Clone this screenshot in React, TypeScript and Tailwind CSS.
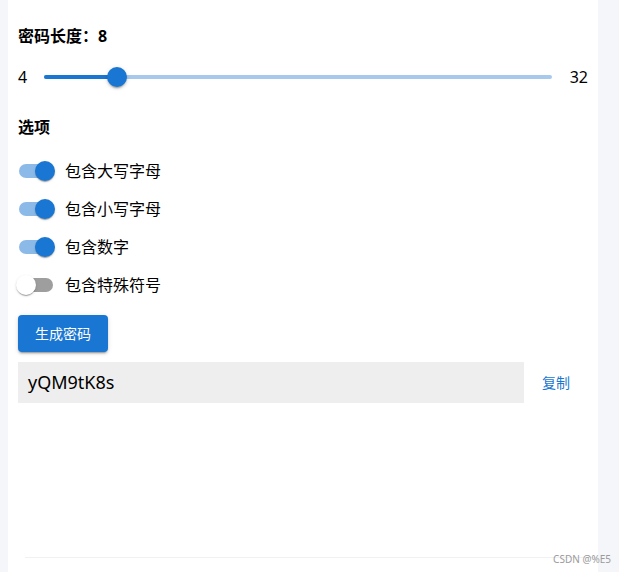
import React, { useState } from 'react';

const font = { fontFamily: '"Noto Sans", "Noto Sans CJK SC", sans-serif' };

const Toggle: React.FC<{ checked: boolean; label: string; onChange: () => void }> = ({ checked, label, onChange }) => (
    <div className="flex items-center h-[38px] cursor-pointer" onClick={onChange}>
        <div className="relative w-[40px] h-[20px] ml-[-2px]">
            <div className={`absolute left-[3px] top-[3px] w-[34px] h-[14px] rounded-full ${checked ? 'bg-[#8cbae8]' : 'bg-[#9e9e9e]'}`} />
            <div
                className={`absolute top-0 w-[20px] h-[20px] rounded-full shadow-[0_2px_1px_-1px_rgba(0,0,0,0.2),0_1px_1px_0_rgba(0,0,0,0.14),0_1px_3px_0_rgba(0,0,0,0.12)] ${checked ? 'left-[19px] bg-[#1976d2]' : 'left-[0px] bg-white'}`}
            />
        </div>
        <span className="ml-[9px] text-[16px] text-black">{label}</span>
    </div>
);

const App: React.FC = () => {
    const [length] = useState(8);
    const [opts, setOpts] = useState({ upper: true, lower: true, digits: true, symbols: false });
    const pct = ((length - 4) / 28) * 100;

    const flip = (k: keyof typeof opts) => setOpts({ ...opts, [k]: !opts[k] });

    return (
        <div className="min-h-[572px] bg-[#f5f6fa] pl-[8px] pr-[21px]" style={font}>
            <div className="relative bg-white min-h-[572px] flex flex-col pl-[10px] pr-[10px]">
                <div className="mt-[24px] h-[24px] leading-[24px] text-[16px] font-bold text-black">
                    密码长度：{length}
                </div>

                <div className="mt-[9px] h-[40px] flex items-center text-[16px] text-black">
                    <span className="w-[26px]">4</span>
                    <div className="relative flex-1 h-[20px]">
                        <div className="absolute left-0 right-0 top-[8px] h-[4px] rounded-full bg-[#a7c9ec]" />
                        <div className="absolute left-0 top-[8px] h-[4px] rounded-full bg-[#1976d2]" style={{ width: `${pct}%` }} />
                        <div
                            className="absolute top-0 w-[20px] h-[20px] -ml-[10px] rounded-full bg-[#1976d2] shadow-[0_3px_1px_-2px_rgba(0,0,0,0.2),0_2px_2px_0_rgba(0,0,0,0.14),0_1px_5px_0_rgba(0,0,0,0.12)]"
                            style={{ left: `${pct}%` }}
                        />
                    </div>
                    <span className="pl-[18px]">32</span>
                </div>

                <div className="mt-[18px] h-[24px] leading-[24px] text-[16px] font-bold text-black">选项</div>

                <div className="mt-[13px] flex flex-col">
                    <Toggle checked={opts.upper} label="包含大写字母" onChange={() => flip('upper')} />
                    <Toggle checked={opts.lower} label="包含小写字母" onChange={() => flip('lower')} />
                    <Toggle checked={opts.digits} label="包含数字" onChange={() => flip('digits')} />
                    <Toggle checked={opts.symbols} label="包含特殊符号" onChange={() => flip('symbols')} />
                </div>

                <button className="mt-[11px] self-start w-[90px] h-[37px] rounded-[4px] bg-[#1976d2] text-white text-[14px] shadow-[0_3px_1px_-2px_rgba(0,0,0,0.2),0_2px_2px_0_rgba(0,0,0,0.14),0_1px_5px_0_rgba(0,0,0,0.12)]">
                    生成密码
                </button>

                <div className="mt-[10px] flex items-center">
                    <div className="w-[506px] h-[41px] bg-[#eeeeee] flex items-center pl-[10px] text-[18px] text-black">
                        yQM9tK8s
                    </div>
                    <button className="ml-[10px] px-[8px] h-[36px] text-[14px] text-[#1976d2]">复制</button>
                </div>

                <div className="flex-1" />
                <div className="ml-[7px] mr-[-10px] mb-[14px] border-t border-[#f0f0f5]" />
                <div className="absolute right-[-13px] bottom-[8px] text-[10px] leading-[10px] text-[#9a9a9a]">CSDN @%E5</div>
            </div>
        </div>
    );
};

export default App;
